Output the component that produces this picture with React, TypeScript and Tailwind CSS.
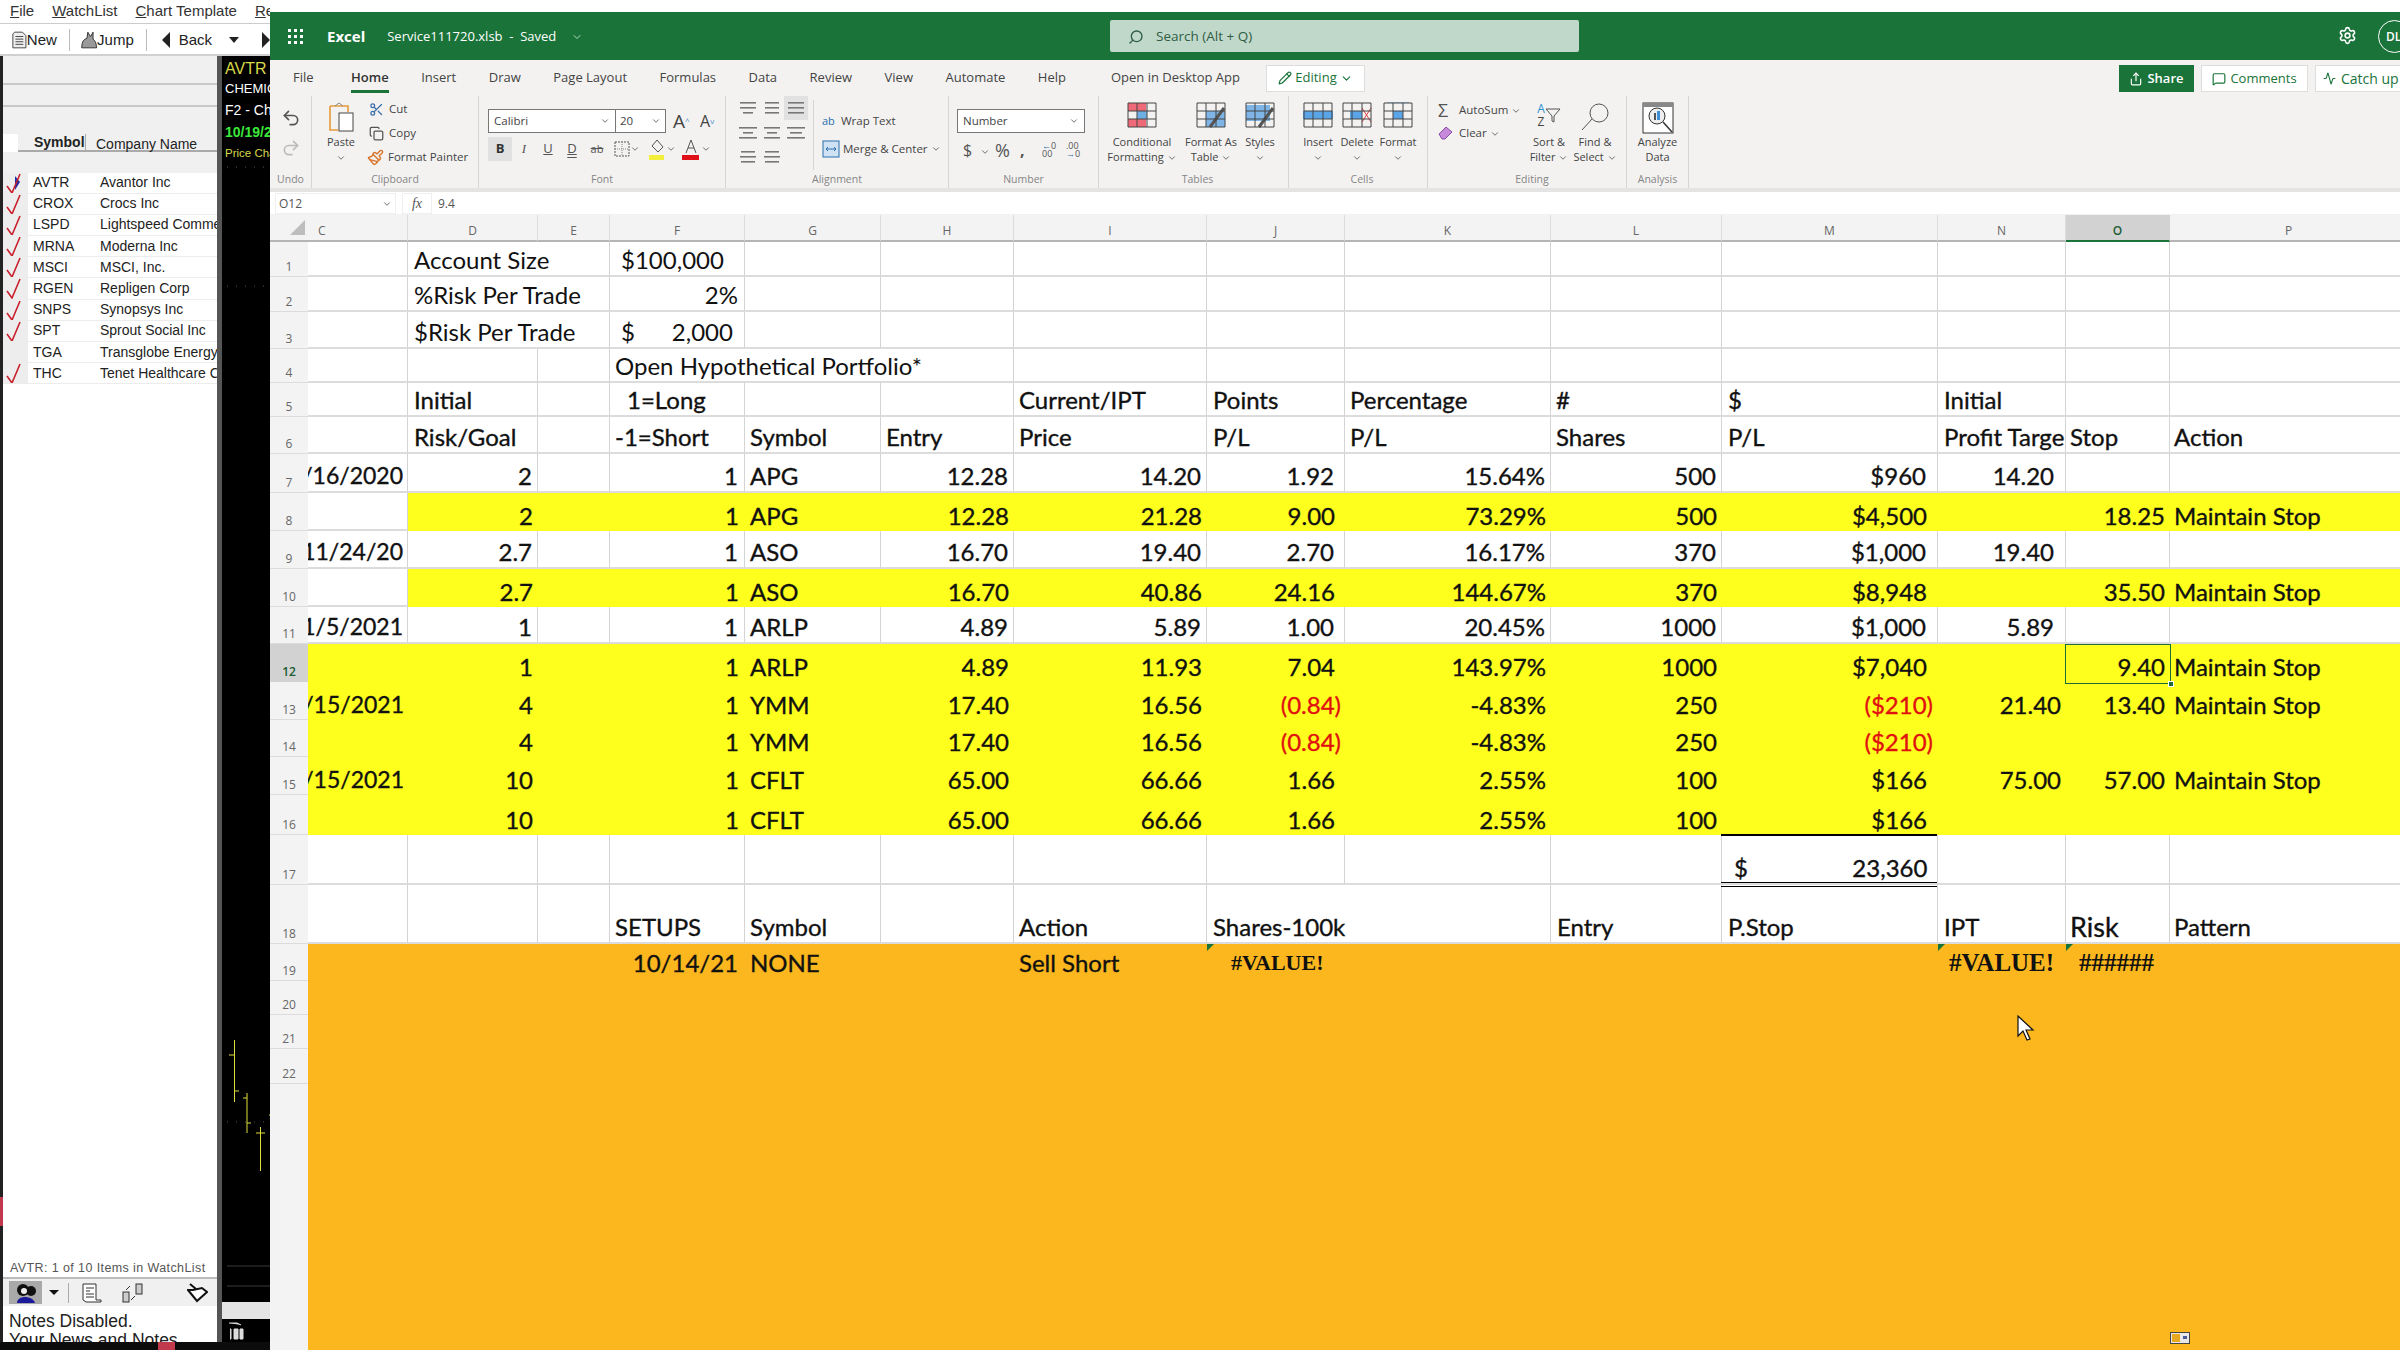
import React from "react";
import {
  Undo2, Redo2, Scissors, Copy, Paintbrush, Search, Settings, Pencil, Share, MessageSquare, Activity, ChevronDown,
} from "lucide-react";

type Spec = { t: string; a?: "l" | "r"; cls?: string; pad?: string; tri?: boolean };
type Row = { n: number; fill?: "y" | "o"; from?: number; cells: Record<string, Spec>; noLine?: string[] };

const COLS = ["C", "D", "E", "F", "G", "H", "I", "J", "K", "L", "M", "N", "O", "P"];
const r = (t: string, pad = "pr-[5px]", cls = ""): Spec => ({ t, a: "r", pad, cls });
const l = (t: string, pad = "pl-[5px]", cls = ""): Spec => ({ t, a: "l", pad, cls });
const date = (t: string) => r(t, "pr-[4px]", "text-[23px]");
const red = "text-[#e01010]";
const serif = "font-['Liberation_Serif',serif] font-bold";

function trade(d: string, f: string, g: string, h: string, i: string, j: Spec, k: string, ll: string, m: Spec): Record<string, Spec> {
  return { D: r(d), F: r(f, "pr-[6px]"), G: l(g), H: r(h), I: r(i), J: j, K: r(k), L: r(ll), M: m };
}

const rows: Row[] = [
  { n: 1, noLine: ["D"], cells: { D: l("Account Size", "pl-[6px]", "font-normal"), F: l("$100,000", "pl-[11px]", "font-normal") } },
  { n: 2, noLine: ["D"], cells: { D: l("%Risk Per Trade", "pl-[6px]", "font-normal"), F: r("2%", "pr-[6px]", "font-normal") } },
  { n: 3, noLine: ["D"], cells: { D: l("$Risk Per Trade", "pl-[6px]", "font-normal"), F: l("$\u00a0\u00a0\u00a0\u00a0\u00a0\u00a02,000", "pl-[11px]", "font-normal") } },
  { n: 4, noLine: ["F", "G"], cells: { F: l("Open Hypothetical Portfolio*", "pl-[5px]", "font-normal") } },
  { n: 5, cells: { D: l("Initial", "pl-[6px]"), F: l("1=Long", "pl-[17px]"), I: l("Current/IPT"), J: l("Points", "pl-[6px]"), K: l("Percentage"), L: l("#", "pl-[5px]"), M: l("$", "pl-[6px]"), N: l("Initial", "pl-[6px]") } },
  { n: 6, cells: { D: l("Risk/Goal", "pl-[6px]"), F: l("-1=Short"), G: l("Symbol"), H: l("Entry"), I: l("Price"), J: l("P/L", "pl-[6px]"), K: l("P/L"), L: l("Shares", "pl-[5px]"), M: l("P/L", "pl-[6px]"), N: l("Profit Targe", "pl-[6px]"), O: l("Stop", "pl-[4px]"), P: l("Action", "pl-[4px]") } },
  { n: 7, cells: { C: date("/16/2020"), ...trade("2", "1", "APG", "12.28", "14.20", r("1.92", "pr-[10px]"), "15.64%", "500", r("$960", "pr-[11px]")), N: r("14.20", "pr-[11px]") } },
  { n: 8, fill: "y", from: 1, cells: { ...trade("2", "1", "APG", "12.28", "21.28", r("9.00", "pr-[10px]"), "73.29%", "500", r("$4,500", "pr-[11px]")), O: r("18.25"), P: l("Maintain Stop", "pl-[4px]") } },
  { n: 9, cells: { C: date("11/24/20"), ...trade("2.7", "1", "ASO", "16.70", "19.40", r("2.70", "pr-[10px]"), "16.17%", "370", r("$1,000", "pr-[11px]")), N: r("19.40", "pr-[11px]") } },
  { n: 10, fill: "y", from: 1, cells: { ...trade("2.7", "1", "ASO", "16.70", "40.86", r("24.16", "pr-[10px]"), "144.67%", "370", r("$8,948", "pr-[11px]")), O: r("35.50"), P: l("Maintain Stop", "pl-[4px]") } },
  { n: 11, cells: { C: date("1/5/2021"), ...trade("1", "1", "ARLP", "4.89", "5.89", r("1.00", "pr-[10px]"), "20.45%", "1000", r("$1,000", "pr-[11px]")), N: r("5.89", "pr-[11px]") } },
  { n: 12, fill: "y", cells: { ...trade("1", "1", "ARLP", "4.89", "11.93", r("7.04", "pr-[10px]"), "143.97%", "1000", r("$7,040", "pr-[11px]")), O: r("9.40"), P: l("Maintain Stop", "pl-[4px]") } },
  { n: 13, fill: "y", cells: { C: date("/15/2021"), ...trade("4", "1", "YMM", "17.40", "16.56", r("(0.84)", "pr-[4px]", red), "-4.83%", "250", r("($210)", "pr-[5px]", red)), N: r("21.40"), O: r("13.40"), P: l("Maintain Stop", "pl-[4px]") } },
  { n: 14, fill: "y", cells: { ...trade("4", "1", "YMM", "17.40", "16.56", r("(0.84)", "pr-[4px]", red), "-4.83%", "250", r("($210)", "pr-[5px]", red)) } },
  { n: 15, fill: "y", cells: { C: date("/15/2021"), ...trade("10", "1", "CFLT", "65.00", "66.66", r("1.66", "pr-[10px]"), "2.55%", "100", r("$166", "pr-[11px]")), N: r("75.00"), O: r("57.00"), P: l("Maintain Stop", "pl-[4px]") } },
  { n: 16, fill: "y", cells: { ...trade("10", "1", "CFLT", "65.00", "66.66", r("1.66", "pr-[10px]"), "2.55%", "100", r("$166", "pr-[11px]")) } },
  { n: 17, cells: { M: l("$\u00a0\u00a0\u00a0\u00a0\u00a0\u00a0\u00a0\u00a0\u00a0\u00a0\u00a0\u00a0\u00a0\u00a0\u00a0\u00a0\u00a023,360", "pl-[12px]") } },
  { n: 18, noLine: ["J"], cells: { F: l("SETUPS"), G: l("Symbol"), I: l("Action"), J: l("Shares-100k", "pl-[6px]"), L: l("Entry", "pl-[6px]"), M: l("P.Stop", "pl-[6px]"), N: l("IPT", "pl-[6px]"), O: l("Risk", "pl-[4px]", "text-[27px]"), P: l("Pattern", "pl-[4px]") } },
  { n: 19, fill: "o", cells: {
    F: r("10/14/21", "pr-[7px]"), G: l("NONE"), I: l("Sell Short"),
    J: { t: "#VALUE!", a: "l", pad: "pl-[24px]", cls: `${serif} text-[22px]`, tri: true },
    N: { t: "#VALUE!", a: "l", pad: "pl-[11px]", cls: `${serif} text-[25px]`, tri: true },
    O: { t: "######", a: "l", pad: "pl-[13px]", cls: `${serif} text-[25px]`, tri: true },
  } },
  { n: 20, fill: "o", cells: {} },
  { n: 21, fill: "o", cells: {} },
  { n: 22, fill: "o", cells: {} },
];

const watch = [
  ["AVTR", "Avantor Inc"], ["CROX", "Crocs Inc"], ["LSPD", "Lightspeed Commerce Inc"], ["MRNA", "Moderna Inc"], ["MSCI", "MSCI, Inc."],
  ["RGEN", "Repligen Corp"], ["SNPS", "Synopsys Inc"], ["SPT", "Sprout Social Inc"], ["TGA", "Transglobe Energy Corp"], ["THC", "Tenet Healthcare Corp"],
];

function Check({ flag }: { flag?: boolean }) {
  return (
    <svg width="22" height="21" viewBox="0 0 22 21" className="ml-[1px]">
      {flag && <path d="M11 3 L16 9 L11 17 Z" fill="#1a2fa8" />}
      <path d="M3 13 L8 20 L16 1" fill="none" stroke="#c8202c" strokeWidth="1.6" />
    </svg>
  );
}

function U({ c, rest }: { c: string; rest: string }) {
  return <span><span className="underline">{c}</span>{rest}</span>;
}

function LeftApp() {
  return (
    <div className="w-[270px] h-full flex flex-col bg-white font-['Liberation_Sans',sans-serif] shrink-0 overflow-hidden">
      <div className="h-[24px] flex items-center gap-[18px] pl-[10px] text-[15px] text-[#333] border-b border-[#ccc] whitespace-nowrap">
        <U c="F" rest="ile" />
        <U c="W" rest="atchList" />
        <U c="C" rest="hart Template" />
        <U c="R" rest="eports" />
      </div>
      <div className="h-[32px] flex items-center pl-[12px] pt-[2px] text-[15px] text-[#222] border-b-2 border-[#d0d0d0] whitespace-nowrap">
        <svg width="17" height="20" viewBox="0 0 17 20"><path d="M3 1h9l4 4v14H1V3z" fill="#eee" stroke="#333" /><path d="M4 6h9M4 9h9M4 12h9M4 15h9" stroke="#333" /></svg>
        <span>New</span>
        <div className="w-px h-[22px] bg-[#bbb] ml-[12px] mr-[10px]" />
        <svg width="20" height="22" viewBox="0 0 20 22"><path d="M2 20 C2 12 5 10 8 9 L9 2 L12 7 L15 2 L15 10 C18 12 19 16 19 20 Z" fill="#999" stroke="#222" /></svg>
        <span>Jump</span>
        <div className="w-px h-[22px] bg-[#bbb] ml-[12px] mr-[15px]" />
        <div className="w-0 h-0 border-y-[8px] border-y-transparent border-r-[8px] border-r-[#222]" />
        <span className="ml-[9px]">Back</span>
        <div className="w-0 h-0 border-x-[5px] border-x-transparent border-t-[6px] border-t-[#222] ml-[17px]" />
        <div className="w-0 h-0 border-y-[8px] border-y-transparent border-l-[8px] border-l-[#222] ml-[23px]" />
      </div>
      <div className="flex-1 flex min-h-0">
        <div className="w-[3px] flex flex-col bg-[#222]">
          <div className="h-[1141px]" />
          <div className="h-[29px] bg-[#c0394d]" />
        </div>
        <div className="w-[214px] flex flex-col bg-white">
          <div className="h-[29px] bg-[#f0f0f0] border-b-2 border-[#c8c8c8]" />
          <div className="h-[22px] bg-[#f0f0f0] border-b-2 border-[#c8c8c8]" />
          <div className="h-[27px] bg-[#f0f0f0]" />
          <div className="h-[18px] bg-[#f0f0f0] flex items-center text-[14px] text-[#222] border-b-2 border-[#aaa] ml-[15px]">
            <span className="w-[67px] pl-[16px] font-bold">Symbol</span>
            <span className="h-full border-l border-[#aaa] pl-[10px] whitespace-nowrap">Company Name</span>
          </div>
          <div className="h-[20.5px] bg-[#f0f0f0]" />
          {watch.map(([s, n], i) => (
            <div key={s} className="h-[21.2px] flex items-center text-[14px] text-[#222] whitespace-nowrap overflow-hidden border-b border-[#ececec]">
              <div className="w-[25px] h-full bg-[#ededed] shrink-0">{s !== "TGA" && <Check flag={i === 0} />}</div>
              <span className="w-[72px] pl-[5px] shrink-0">{s}</span>
              <span>{n}</span>
            </div>
          ))}
          <div className="flex-1" />
          <div className="h-[17px] pl-[7px] text-[12.5px] tracking-[0.4px] text-[#555] leading-[17px] whitespace-nowrap">AVTR: 1 of 10 Items in WatchList</div>
          <div className="h-[29px] flex items-center bg-[#f0f0f0] border-t-2 border-[#bbb] pl-[6px]">
            <div className="w-[33px] h-[23px] bg-[#a9a9a9] flex items-center justify-center">
              <svg width="24" height="22" viewBox="0 0 24 22"><circle cx="9" cy="8" r="6" fill="#111" /><circle cx="17" cy="9" r="5" fill="#111" /><circle cx="10" cy="9" r="3" fill="#eee" /><path d="M3 21c0-4 4-6 8-6s9 2 10 6z" fill="#1a1a9a" /></svg>
            </div>
            <div className="w-0 h-0 border-x-[5px] border-x-transparent border-t-[5px] border-t-[#111] ml-[7px]" />
            <div className="w-px h-[20px] bg-[#aaa] ml-[9px] mr-[12px]" />
            <svg width="21" height="20" viewBox="0 0 21 20"><path d="M2 1h13v16h5v2H5l-3-2z" fill="#fff" stroke="#333" /><path d="M5 5h8M5 8h4M5 11h8M5 14h8" stroke="#333" /></svg>
            <svg width="21" height="20" viewBox="0 0 21 20" className="ml-[20px]"><rect x="1" y="9" width="6" height="10" fill="#ccc" stroke="#333" /><rect x="14" y="1" width="6" height="10" fill="#ccc" stroke="#333" /><path d="M4 7l4-4M9 17l4-4" stroke="#333" /></svg>
            <svg width="21" height="20" viewBox="0 0 21 20" className="ml-[44px]"><path d="M1 7l9 11 10-9-5-4-9 2zM3 1l6 5" fill="#fff" stroke="#111" strokeWidth="2" /></svg>
          </div>
          <div className="h-[36px] pl-[6px] pt-[6px] text-[17.5px] leading-[19px] text-[#222] overflow-hidden whitespace-nowrap">
            <div>Notes Disabled.</div>
            <div>Your News and Notes</div>
          </div>
        </div>
        <div className="w-[5px] bg-[#555]" />
        <div className="flex-1 bg-black flex flex-col overflow-hidden whitespace-nowrap">
          <div className="h-[109px] pl-[3px] pt-[2px]">
            <div className="text-[16px] leading-[21px] text-[#d8d84a]">AVTR</div>
            <div className="text-[13px] leading-[20px] text-white">CHEMICALS</div>
            <div className="text-[14px] leading-[22px] text-white">F2 - Chart</div>
            <div className="text-[14px] leading-[22px] font-bold text-[#3be83b]">10/19/21</div>
            <div className="text-[11.5px] leading-[20px] text-[#d8d84a]">Price Chart</div>
          </div>
          <svg width="43" height="1137" viewBox="227 165 43 1137" className="shrink-0 ml-[5px]">
            <path d="M227 167H270M227 286H270M227 1122H270" stroke="#555" strokeDasharray="1 8" />
            <path d="M234.5 1040V1102M229 1055H234.5M234.5 1091H239M247 1093V1133M243 1098H247M247 1123H251M260.5 1127V1171M256 1133H265M269 1115H270" stroke="#dede3c" />
            <path d="M225 1266H270M225 1286H270" stroke="#3a3a3a" />
          </svg>
          <div className="h-[17px] bg-[#e4e4e4] shrink-0" />
          <div className="h-[22px] pl-[6px] pt-[1px] shrink-0">
            <svg width="18" height="20" viewBox="0 0 18 20"><path d="M1 3h8l4 2M2 9h1v10H2M6 9h4v10H6zM12 9h3v10h-3z" stroke="#ddd" fill="#ddd" /></svg>
          </div>
          <div className="flex-1" />
        </div>
      </div>
      <div className="h-[8px] bg-[#0c0c0c] flex shrink-0">
        <div className="w-[158px]" />
        <div className="w-[17px] bg-[#c0394d]" />
      </div>
    </div>
  );
}

function Group({ label, className, children }: { label: string; className: string; children: React.ReactNode }) {
  return (
    <div className={`flex flex-col h-full border-r border-[#d6d6d6] shrink-0 ${className}`}>
      <div className="h-[76px] flex">{children}</div>
      <div className="h-[16px] text-center text-[10.5px] leading-[14px] text-[#858585]">{label}</div>
    </div>
  );
}

function Chev() {
  return <ChevronDown size={10} className="inline text-[#555]" strokeWidth={2} />;
}

function Big({ w, icon, a, b }: { w: string; icon: React.ReactNode; a: string; b?: React.ReactNode }) {
  return (
    <div className={`${w} flex flex-col items-center pt-[6px] text-[11px] leading-[15px] text-[#444] whitespace-nowrap shrink-0`}>
      <div className="h-[32px]">{icon}</div>
      <div>{a}</div>
      <div>{b ?? <Chev />}</div>
    </div>
  );
}

function Lines({ w }: { w: number[] }) {
  return (
    <svg width="18" height="14" viewBox="0 0 18 14">
      {w.map((x, i) => <rect key={i} x={x} y={i * 5 + 1} width={18 - 2 * x} height="1.6" fill="#777" />)}
    </svg>
  );
}

function Grid({ children }: { children?: React.ReactNode }) {
  return (
    <svg width="30" height="26" viewBox="0 0 30 26">
      {children}
      <path d="M1 1h28v24H1zM1 9h28M1 17h28M10 1v24M20 1v24" fill="none" stroke="#444" />
    </svg>
  );
}

function Ribbon() {
  return (
    <div className="h-[92px] flex bg-[#f3f2f1]">
      <Group label="Undo" className="w-[42px]">
        <div className="w-full flex flex-col items-center pt-[12px] gap-[10px]">
          <Undo2 size={20} className="text-[#555]" />
          <Redo2 size={20} className="text-[#bbb]" />
        </div>
      </Group>
      <Group label="Clipboard" className="w-[167px]">
        <Big w="w-[46px] ml-[6px]" a="Paste" icon={
          <svg width="30" height="32" viewBox="0 0 30 32"><path d="M4 4h18v6M4 4v24h8" fill="none" stroke="#e59a3c" strokeWidth="1.6" /><path d="M9 4l4-3 4 3" fill="none" stroke="#888" /><rect x="13" y="11" width="14" height="18" fill="#fff" stroke="#444" /></svg>
        } />
        <div className="flex flex-col pt-[1px] pl-[3px] text-[11.5px] text-[#444] whitespace-nowrap">
          <div className="h-[24px] flex items-center"><Scissors size={15} className="ml-[2px] mr-[5px] text-[#3c6fa8]" /><span>Cut</span></div>
          <div className="h-[24px] flex items-center"><Copy size={15} className="ml-[2px] mr-[5px] text-[#555]" /><span>Copy</span></div>
          <div className="h-[24px] flex items-center"><Paintbrush size={17} className="mr-[4px] text-[#d8742c]" /><span>Format Painter</span></div>
        </div>
      </Group>
      <Group label="Font" className="w-[247px]">
        <div className="flex flex-col pl-[9px] pt-[13px] w-full">
          <div className="flex items-center">
            <div className="h-[24px] flex border border-[#777] bg-white text-[11.5px] text-[#444] w-[178px] shrink-0">
              <div className="w-[127px] flex items-center justify-between px-[5px] border-r border-[#777]"><span>Calibri</span><Chev /></div>
              <div className="flex-1 flex items-center justify-between px-[4px]"><span>20</span><Chev /></div>
            </div>
            <span className="ml-[7px] w-[27px] text-[19px] leading-[22px] text-[#444]">A<span className="text-[8px] align-top text-[#4a90d0]">^</span></span>
            <span className="w-[20px] text-[16px] leading-[22px] text-[#444]">A<span className="text-[8px] align-top text-[#4a90d0]">v</span></span>
          </div>
          <div className="h-[24px] mt-[4px] flex items-center text-[13px] text-[#555]">
            <div className="w-[24px] h-[24px] bg-[#e1e1e1] flex items-center justify-center font-bold text-[#333]">B</div>
            <span className="w-[24px] text-center italic font-['Liberation_Serif',serif]">I</span>
            <span className="w-[24px] text-center underline">U</span>
            <span className="w-[24px] text-center underline decoration-double">D</span>
            <span className="w-[26px] text-center line-through text-[11px]">ab</span>
            <svg width="16" height="16" viewBox="0 0 16 16" className="ml-[4px]"><path d="M1 1h14v14H1z" fill="none" stroke="#555" strokeDasharray="2 1" /><path d="M8 1v14M1 8h14" stroke="#888" strokeDasharray="1 1" /></svg>
            <Chev />
            <svg width="18" height="22" viewBox="0 0 18 22" className="ml-[8px]"><path d="M9 2l6 7-5 5-6-6z" fill="none" stroke="#555" /><rect x="1" y="17" width="15" height="5" fill="#f2ee3c" /></svg>
            <Chev />
            <svg width="20" height="22" viewBox="0 0 20 22" className="ml-[5px]"><path d="M5 15l5-13 5 13M7 10h6" fill="none" stroke="#555" /><rect x="1" y="17" width="17" height="5" fill="#e01018" /></svg>
            <Chev />
          </div>
        </div>
      </Group>
      <Group label="Alignment" className="w-[223px]">
        <div className="w-[87px] pl-[10px] grid grid-cols-[24px_24px_24px] grid-rows-[24px_25px_24px] items-center justify-items-center">
          <Lines w={[1, 1, 4]} />
          <Lines w={[2, 2, 2]} />
          <div className="w-[24px] h-[24px] bg-[#e1e1e1] flex items-center justify-center"><Lines w={[1, 1, 1]} /></div>
          <Lines w={[0, 4, 0]} />
          <Lines w={[1, 4, 1]} />
          <Lines w={[0, 3, 0]} />
          <Lines w={[2, 1, 2]} />
          <Lines w={[2, 1, 2]} />
        </div>
        <div className="h-[70px] border-l border-[#d6d6d6] mt-[4px]" />
        <div className="flex flex-col pl-[8px] pt-[15px] text-[11.5px] text-[#444] gap-[8px] whitespace-nowrap">
          <div className="h-[20px] flex items-center gap-[3px]"><span className="text-[11px] text-[#2a6fb0] leading-[10px] w-[16px]">ab</span><span>Wrap Text</span></div>
          <div className="h-[20px] flex items-center gap-[3px]">
            <svg width="18" height="18" viewBox="0 0 18 18"><rect x="1" y="1" width="16" height="16" fill="#cfe2f3" stroke="#2a6fb0" /><path d="M4 9h10M4 9l2-2M4 9l2 2M14 9l-2-2M14 9l-2 2" stroke="#2a6fb0" fill="none" /></svg>
            <span>Merge &amp; Center</span><Chev />
          </div>
        </div>
      </Group>
      <Group label="Number" className="w-[150px]">
        <div className="flex flex-col pl-[8px] pt-[13px] w-full">
          <div className="w-[128px] h-[24px] border border-[#777] bg-white flex items-center justify-between px-[5px] text-[11.5px] text-[#444]"><span>Number</span><Chev /></div>
          <div className="h-[26px] mt-[4px] flex items-center text-[#555] text-[16px] pl-[6px]">
            <span className="w-[17px]">$</span>
            <span className="w-[15px]"><Chev /></span>
            <span className="w-[25px] text-[18px]">%</span>
            <span className="w-[22px] font-bold leading-[14px]">,</span>
            <span className="w-[24px] text-[9px] leading-[8px]"><span className="text-[#2a6fb0]">←</span>0<br />00</span>
            <span className="text-[9px] leading-[8px]">.00<br /><span className="text-[#2a6fb0]">→</span>0</span>
          </div>
        </div>
      </Group>
      <Group label="Tables" className="w-[190px] pl-[8px]">
        <Big w="w-[70px]" a="Conditional" b={<span>Formatting <Chev /></span>} icon={
          <Grid><rect x="1" y="1" width="18" height="8" fill="#ef6a78" /><rect x="10" y="9" width="10" height="8" fill="#6eb0e4" /><rect x="1" y="17" width="18" height="8" fill="#ef6a78" /></Grid>
        } />
        <Big w="w-[68px]" a="Format As" b={<span>Table <Chev /></span>} icon={
          <Grid><rect x="10" y="9" width="19" height="16" fill="#7fb5e6" /><path d="M14 25L28 6" stroke="#555" strokeWidth="3" /></Grid>
        } />
        <Big w="w-[30px]" a="Styles" icon={
          <Grid><rect x="1" y="3" width="24" height="16" fill="#7fb5e6" /><path d="M14 25L28 6" stroke="#555" strokeWidth="3" /></Grid>
        } />
      </Group>
      <Group label="Cells" className="w-[139px] pl-[8px]">
        <Big w="w-[42px]" a="Insert" icon={<Grid><rect x="0" y="9" width="30" height="8" fill="#5aa5e8" /></Grid>} />
        <Big w="w-[36px]" a="Delete" icon={<Grid><rect x="8" y="9" width="12" height="8" fill="#5aa5e8" /><path d="M20 6l9 14M29 6l-9 14" stroke="#e0404a" /></Grid>} />
        <Big w="w-[46px]" a="Format" icon={<Grid><rect x="10" y="9" width="10" height="8" fill="#5aa5e8" /><path d="M4 0h22" stroke="#5aa5e8" /></Grid>} />
      </Group>
      <Group label="Editing" className="w-[199px] pl-[10px]">
        <div className="w-[90px] flex flex-col pt-[2px] text-[11.5px] text-[#444] whitespace-nowrap shrink-0">
          <div className="h-[23px] flex items-center gap-[7px]"><span className="text-[18px] text-[#555] w-[14px] leading-[18px]">Σ</span><span>AutoSum <Chev /></span></div>
          <div className="h-[23px] flex items-center gap-[6px]">
            <svg width="15" height="14" viewBox="0 0 15 14"><path d="M1 8l7-7 6 5-7 7H4z" fill="#c68ad8" stroke="#8c4aa8" /></svg>
            <span>Clear <Chev /></span>
          </div>
        </div>
        <Big w="w-[42px]" a="Sort &" b={<span>Filter <Chev /></span>} icon={
          <div className="flex items-center"><div className="text-[12px] leading-[13px] text-center"><div className="text-[#2a8fd0]">A</div><div>Z</div></div>
            <svg width="16" height="16" viewBox="0 0 16 16"><path d="M1 2h14L9 9v6l-2-1V9z" fill="none" stroke="#555" /></svg></div>
        } />
        <Big w="w-[50px]" a="Find &" b={<span>Select <Chev /></span>} icon={
          <svg width="30" height="30" viewBox="0 0 30 30"><circle cx="19" cy="11" r="9" fill="none" stroke="#555" /><path d="M12 17L2 28" stroke="#555" /></svg>
        } />
      </Group>
      <Group label="Analysis" className="w-[62px]">
        <Big w="w-full" a="Analyze" b="Data" icon={
          <svg width="32" height="32" viewBox="0 0 32 32"><rect x="1" y="1" width="30" height="30" fill="#fff" stroke="#333" /><rect x="1" y="1" width="30" height="4" fill="#888" /><circle cx="15" cy="14" r="8" fill="#eee" stroke="#333" /><rect x="12" y="11" width="2" height="7" fill="#555" /><rect x="15" y="9" width="3" height="9" fill="#3c8fd8" /><path d="M21 20l9 10" stroke="#333" strokeWidth="1.5" /></svg>
        } />
      </Group>
    </div>
  );
}

function Sheet() {
  return (
    <div className="relative grid grid-cols-[38px_100px_130px_72px_135px_136px_133px_193px_138px_206px_171px_216px_128px_104px_238px] grid-rows-[27px_35px_35px_37px_34px_34px_37px_39px_38px_38px_38px_37px_38px_38px_37px_38px_40px_50px_59px_37px_34px_34px_35px_266px] font-['Lato',sans-serif] text-[24px] text-[#111]">
      <div className="bg-[#f3f3f3] border-b-2 border-[#b5b5b5] flex items-center justify-end pr-[3px]">
        <div className="w-0 h-0 border-b-[15px] border-b-[#bdbdbd] border-l-[15px] border-l-transparent" />
      </div>
      {COLS.map((c) => (
        <div key={c} className={`border-b-2 border-r font-['Open_Sans',sans-serif] text-[12px] leading-[18px] flex items-end ${c === "C" ? "justify-start pl-[10px]" : "justify-center"} ${c === "O" ? "bg-[#d2d2d2] border-b-[#1a7339] text-[#1a5c32] font-semibold border-r-[#d2d2d2]" : "bg-[#f3f3f3] border-b-[#b5b5b5] border-r-[#dcdcdc] text-[#666]"}`}>{c}</div>
      ))}
      {rows.map((row) => (
        <React.Fragment key={row.n}>
          <div className={`flex items-end justify-center border-b font-['Open_Sans',sans-serif] text-[12px] ${row.n === 12 ? "bg-[#d2d2d2] border-[#d2d2d2] text-[#1a5c32] font-semibold" : "bg-[#f3f3f3] border-[#dcdcdc] text-[#666]"}`}>{row.n}</div>
          {COLS.map((c, i) => {
            const spec = row.cells[c];
            const filled = row.fill && i >= (row.from ?? 0);
            const fillCls = filled ? (row.fill === "y" ? "bg-[#ffff1e]" : "bg-[#fbb71d]") : `border-b-2 border-b-[#dcdcdc] ${row.noLine?.includes(c) ? "" : "border-r border-r-[#d4d4d4]"}`;
            const clip = spec?.a === "r" || c === "N" ? "overflow-hidden" : "";
            const weight = spec?.cls?.includes("font-normal") || spec?.cls?.includes("font-bold") ? "" : "[-webkit-text-stroke:0.35px_currentColor]";
            return (
              <div key={c} className={`relative flex items-end whitespace-nowrap ${row.n === 19 ? "pb-[3px] leading-[30px]" : "leading-[31px]"} ${weight} ${spec?.a === "r" ? "justify-end" : "justify-start"} ${clip} ${fillCls} ${spec?.pad ?? ""} ${spec?.cls ?? ""}`}>
                {spec?.t}
                {spec?.tri && <span className="absolute left-0 top-0 w-0 h-0 border-t-[7px] border-t-[#1a7339] border-r-[7px] border-r-transparent" />}
              </div>
            );
          })}
        </React.Fragment>
      ))}
      <div className="bg-[#f3f3f3]" />
      <div className="col-span-14 bg-[#fbb71d]" />
      {/* selected cell O12, and the total's rules */}
      <div className="absolute left-[1795px] top-[429px] w-[106px] h-[40px] border-[1.5px] border-[#1f6b3c]">
        <span className="absolute right-[-4px] bottom-[-4px] w-[6px] h-[6px] bg-[#1f6b3c] border border-white" />
      </div>
      <div className="absolute left-[1451px] top-[619px] w-[216px] h-[2px] bg-black" />
      <div className="absolute left-[1451px] top-[667px] w-[216px] h-[5px] border-y-[1.5px] border-black" />
      <svg className="absolute left-[1747px] top-[800px]" width="18" height="26" viewBox="0 0 18 26">
        <path d="M1 1v20l5-5 4 9 3-1-4-9h7z" fill="#fff" stroke="#111" strokeWidth="1.2" />
      </svg>
      <svg className="absolute left-[1900px] top-[1117px]" width="20" height="12" viewBox="0 0 20 12">
        <rect x="0.5" y="0.5" width="19" height="11" fill="#e8e8e8" stroke="#444" />
        <rect x="2" y="2" width="8" height="8" fill="#e8a820" />
        <rect x="13" y="4" width="4" height="3" fill="#4a5a9a" />
      </svg>
    </div>
  );
}

function Excel() {
  return (
    <div className="flex-1 min-w-0 h-full flex flex-col bg-white pt-[12px] overflow-hidden font-['Open_Sans',sans-serif]">
      <div className="h-[48px] bg-[#1a7339] flex items-center pt-[1px] text-white whitespace-nowrap shrink-0 relative">
        <svg width="17" height="17" viewBox="0 0 17 17" className="ml-[17px]" fill="#fff">
          {[1, 7, 13].flatMap((y) => [1, 7, 13].map((x) => <rect key={`${x}${y}`} x={x} y={y} width="3" height="3" />))}
        </svg>
        <span className="ml-[23px] text-[15px] font-bold">Excel</span>
        <span className="ml-[22px] text-[13px]">Service111720.xlsb&nbsp;&nbsp;-&nbsp;&nbsp;Saved</span>
        <ChevronDown size={12} className="ml-[15px] text-[#b9d6c4]" />
        <div className="absolute left-[840px] top-[8px] w-[469px] h-[32px] rounded-[2px] bg-[#c0d8ca] flex items-center pl-[18px] pt-[1px] text-[13.5px] text-[#2f5c42]">
          <Search size={16} className="-scale-x-100 mr-[12px]" />
          <span>Search (Alt + Q)</span>
        </div>
        <Settings size={19} className="absolute left-[2068px] top-[14px]" />
        <div className="absolute left-[2108px] top-[8px] w-[33px] h-[33px] rounded-full border border-white flex items-center pl-[7px] text-[12px] font-semibold">DL</div>
      </div>
      <div className="h-[36px] bg-[#f3f2f1] flex items-center text-[13px] text-[#444] whitespace-nowrap pl-[23px] shrink-0 relative">
        <div className="flex gap-[32.5px]">
          <span className="mr-[5px]">File</span>
          <span className="relative font-semibold text-[#333]">Home<span className="absolute left-0 right-0 top-[22px] h-[3px] bg-[#1a7339]" /></span>
          <span>Insert</span>
          <span>Draw</span>
          <span>Page Layout</span>
          <span>Formulas</span>
          <span>Data</span>
          <span>Review</span>
          <span>View</span>
          <span>Automate</span>
          <span>Help</span>
        </div>
        <span className="ml-[45px]">Open in Desktop App</span>
        <div className="ml-[26px] w-[99px] h-[27px] bg-white border border-[#ddd] flex items-center justify-center gap-[3px] text-[#1a7339]">
          <Pencil size={14} /><span>Editing</span><ChevronDown size={13} />
        </div>
        <div className="absolute left-[1849px] top-[5px] flex gap-[7px]">
          <div className="w-[75px] h-[27px] bg-[#1a7339] text-white font-semibold flex items-center justify-center gap-[4px]"><Share size={14} />Share</div>
          <div className="w-[107px] h-[27px] bg-white border border-[#ddd] text-[#1a7339] flex items-center justify-center gap-[4px]"><MessageSquare size={14} />Comments</div>
          <div className="w-[100px] h-[27px] bg-white border border-[#ddd] text-[#1a7339] flex items-center pl-[7px] gap-[5px] text-[14px]"><Activity size={13} />Catch up</div>
        </div>
      </div>
      <Ribbon />
      <div className="h-[4px] bg-[#e4e4e4] shrink-0" />
      <div className="h-[23px] flex items-stretch bg-white text-[12px] text-[#555] pl-[5px] pt-[1px] shrink-0 border-b border-[#f2f2f2]">
        <div className="w-[121px] border border-[#f0f0f0] flex items-center justify-between px-[3px]"><span>O12</span><Chev /></div>
        <div className="w-[30px] ml-[6px] border border-[#f0f0f0] flex items-center justify-center font-['Liberation_Serif',serif] italic text-[14px]">fx</div>
        <div className="ml-[4px] pl-[2px] flex items-center">9.4</div>
      </div>
      <Sheet />
    </div>
  );
}

export default function App() {
  return (
    <div className="w-[2400px] h-[1350px] flex overflow-hidden bg-white">
      <LeftApp />
      <Excel />
    </div>
  );
}
